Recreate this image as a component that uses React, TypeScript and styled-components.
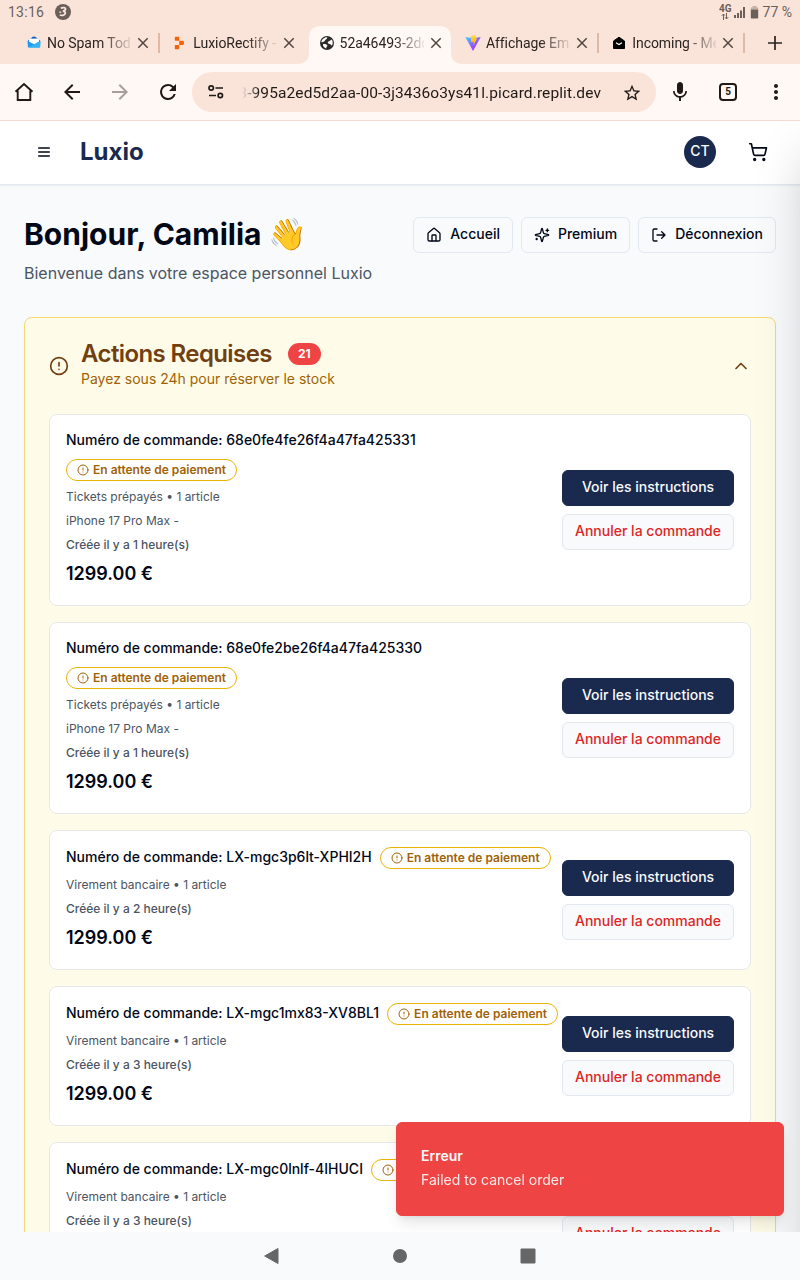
import React from 'react';
import styled, { createGlobalStyle, css } from 'styled-components';

const GlobalStyle = createGlobalStyle`
  *, *::before, *::after { box-sizing: border-box; }
  body { margin: 0; background: #f8fafc; }
  h1, h2, p { margin: 0; }
  button { font: inherit; margin: 0; }
  svg { display: block; flex: none; }
`;

const Screen = styled.div`
  width: 800px;
  height: 1280px;
  display: flex;
  flex-direction: column;
  overflow: hidden;
  font-family: Inter, sans-serif;
  color: #020817;
`;

/* ---------- Browser chrome ---------- */

const StatusBar = styled.div`
  height: 26px;
  flex: none;
  display: flex;
  align-items: center;
  justify-content: space-between;
  padding: 0 8px 2px 8px;
  background: #fae4d9;
  color: #6b5f5a;
  font: 14px/24px Roboto, sans-serif;
`;

const StatusGroup = styled.div<{ $gap: number }>`
  display: flex;
  align-items: center;
  gap: ${(p) => p.$gap}px;
`;

const Clock = styled.span`
  letter-spacing: 0.25px;
`;

const Battery = styled.span`
  letter-spacing: 0;
`;

const TabStrip = styled.div`
  height: 38px;
  flex: none;
  display: flex;
  padding-left: 14px;
  background: #fae4d9;
  font: 14px/34px Roboto, sans-serif;
  color: #2b2320;
`;

const Tab = styled.div<{ $divider?: boolean }>`
  position: relative;
  width: 146.3px;
  height: 38px;
  display: flex;
  align-items: center;
  padding: 0 0 4px 12px;
  ${(p) =>
    p.$divider &&
    css`
      &::after {
        content: '';
        position: absolute;
        right: 0;
        top: 7px;
        width: 2px;
        height: 20px;
        background: #deb9a5;
      }
    `}
`;

const ActiveShape = styled.svg`
  position: absolute;
  left: -9.6px;
  top: 0;
`;

const Favicon = styled.span`
  position: relative;
  width: 16px;
  height: 16px;
  flex: none;
  display: flex;
  align-items: center;
  justify-content: center;
`;

const TabTitle = styled.span`
  position: relative;
  width: 84px;
  margin-left: 5px;
  white-space: nowrap;
  overflow: hidden;
  letter-spacing: -0.05px;
  mask-image: linear-gradient(to right, #000 64%, transparent 104%);
`;

const TabClose = styled.span`
  position: relative;
  margin-left: 6px;
`;

const NewTab = styled.div`
  display: flex;
  padding: 10px 0 0 23px;
`;

const Toolbar = styled.div`
  height: 57px;
  flex: none;
  display: flex;
  align-items: center;
  background: #fff8f5;
  border-bottom: 1px solid #f5dcd0;
  color: #201a17;
`;

const ToolSlot = styled.div<{ $dim?: boolean }>`
  width: 48px;
  display: flex;
  justify-content: center;
  opacity: ${(p) => (p.$dim ? 0.4 : 1)};
`;

const UrlPill = styled.div`
  width: 464px;
  height: 40px;
  flex: none;
  display: flex;
  align-items: center;
  border-radius: 20px;
  background: #fae4d9;
  padding-left: 14px;
`;

const Url = styled.span`
  width: 362px;
  margin-left: 13px;
  padding-top: 2px;
  display: flex;
  justify-content: flex-end;
  overflow: hidden;
  white-space: nowrap;
  font: 15.5px/24px Roboto, sans-serif;
  letter-spacing: 0.1px;
  mask-image: linear-gradient(to right, transparent 3px, #000 20px);
`;

const StarSlot = styled.div`
  margin-left: 21px;
  padding-top: 1px;
`;

const TabCount = styled.div`
  width: 18px;
  height: 18px;
  border: 2px solid #201a17;
  border-radius: 4px;
  font: bold 10px/14px Roboto, sans-serif;
  text-align: center;
`;

const NavBar = styled.div`
  height: 48px;
  flex: none;
  display: flex;
  align-items: center;
  justify-content: center;
  gap: 112px;
  background: #f8fafc;
`;

/* ---------- Site ---------- */

const Site = styled.div`
  position: relative;
  flex: 1;
  min-height: 0;
  overflow: hidden;
  background: #f8fafc;
`;

const SiteHeader = styled.header`
  height: 64px;
  display: flex;
  align-items: center;
  padding: 0 32px 1px 36px;
  background: #fff;
  border-bottom: 1px solid #e2e8f0;
  box-shadow: 0 1px 2px rgba(0, 0, 0, 0.06);
`;

const Brand = styled.span`
  flex: 1;
  margin-left: 28px;
  font-weight: 700;
  font-size: 24px;
  line-height: 32px;
  color: #1a2a4e;
`;

const Avatar = styled.div`
  width: 32px;
  height: 32px;
  margin-right: 32px;
  border-radius: 50%;
  background: #1a2a4e;
  color: #f8fafc;
  font-size: 14px;
  font-weight: 500;
  line-height: 30px;
  text-align: center;
`;

const Main = styled.main`
  padding: 32px 24px 0;
`;

const Intro = styled.div`
  display: flex;
  justify-content: space-between;
  align-items: flex-start;
  margin-bottom: 32px;
`;

const Greeting = styled.h1`
  height: 36px;
  font-size: 30px;
  line-height: 34px;
  font-weight: 700;
  white-space: nowrap;
`;

const Emoji = styled.span`
  font-family: 'Noto Color Emoji', sans-serif;
  font-size: 31px;
  line-height: 30px;
  font-weight: 400;
`;

const Welcome = styled.p`
  margin-top: 8px;
  font-size: 16px;
  line-height: 24px;
  color: #4b5563;
`;

const Actions = styled.div`
  display: flex;
  gap: 8px;
`;

const buttonBase = css`
  height: 36px;
  border-radius: 6px;
  font-size: 14px;
  font-weight: 500;
  line-height: 20px;
  white-space: nowrap;
`;

const LinkButton = styled.button`
  ${buttonBase}
  display: flex;
  align-items: center;
  gap: 8px;
  padding: 0 12px;
  border: 1px solid #e2e8f0;
  background: #f8fafc;
  color: #020817;
`;

const ButtonLabel = styled.span`
  padding-bottom: 2px;
`;

const Panel = styled.section`
  padding: 24px;
  border: 1px solid #f3d877;
  border-radius: 8px;
  background: #fefce8;
  box-shadow: 0 1px 2px rgba(0, 0, 0, 0.05);
`;

const PanelHead = styled.div`
  display: flex;
  align-items: center;
  gap: 12px;
  height: 48px;
  margin-bottom: 24px;
  color: #713f12;
`;

const PanelText = styled.div`
  flex: 1;
  padding-bottom: 2px;
`;

const PanelTitle = styled.h2`
  display: flex;
  align-items: center;
  gap: 16px;
  height: 24px;
  font-size: 24px;
  line-height: 24px;
  font-weight: 600;
  letter-spacing: -0.6px;
`;

const Count = styled.span`
  width: 33px;
  height: 22px;
  border-radius: 11px;
  background: #ef4444;
  color: #f8fafc;
  font-size: 12px;
  font-weight: 700;
  line-height: 22px;
  letter-spacing: 0;
  text-align: center;
`;

const PanelHint = styled.p`
  margin-top: 3px;
  font-size: 14px;
  line-height: 20px;
  color: #a16207;
`;

const OrderList = styled.div`
  display: flex;
  flex-direction: column;
  gap: 16px;
`;

const OrderCard = styled.article`
  display: flex;
  align-items: center;
  padding: 16px;
  border: 1px solid #e5e7eb;
  border-radius: 8px;
  background: #fff;
`;

const OrderInfo = styled.div`
  flex: 1;
  min-width: 0;
  display: flex;
  flex-direction: column;
  gap: 8px;
`;

const OrderTop = styled.div`
  display: flex;
  flex-wrap: wrap;
  align-items: center;
  gap: 8px;
`;

const OrderNumber = styled.span`
  position: relative;
  top: -1px;
  font-size: 14px;
  line-height: 20px;
  font-weight: 500;
  white-space: nowrap;
`;

const StatusBadge = styled.span`
  display: flex;
  align-items: center;
  gap: 4px;
  height: 22px;
  padding: 0 10px;
  border: 1px solid #eab308;
  border-radius: 11px;
  color: #a16207;
  font-size: 12px;
  font-weight: 600;
  line-height: 20px;
  white-space: nowrap;
`;

const Detail = styled.p<{ $strong?: boolean }>`
  font-size: 12px;
  line-height: 16px;
  font-weight: ${(p) => (p.$strong ? 500 : 400)};
  color: #4b5563;
`;

const Price = styled.p`
  height: 28px;
  font-size: 18px;
  line-height: 26px;
  font-weight: 600;
`;

const OrderActions = styled.div`
  width: 172px;
  flex: none;
  display: flex;
  flex-direction: column;
  gap: 8px;
`;

const OrderButton = styled.button<{ $primary?: boolean }>`
  ${buttonBase}
  padding: 0 0 2px;
  border: 1px solid ${(p) => (p.$primary ? '#1a2a4e' : '#e2e8f0')};
  background: ${(p) => (p.$primary ? '#1a2a4e' : '#f8fafc')};
  color: ${(p) => (p.$primary ? '#f8fafc' : '#dc2626')};
`;

const Toast = styled.div`
  position: absolute;
  right: 16px;
  bottom: 16px;
  width: 388px;
  height: 94px;
  padding: 24px;
  border: 1px solid #ef4444;
  border-radius: 6px;
  background: #ef4444;
  color: #f8fafc;
  font-size: 14px;
  line-height: 20px;
  box-shadow: 0 10px 15px -3px rgba(0, 0, 0, 0.1), 0 4px 6px -4px rgba(0, 0, 0, 0.1);
`;

const ToastTitle = styled.p`
  position: relative;
  top: -1px;
  font-weight: 600;
  margin-bottom: 4px;
`;

const ToastText = styled.p`
  position: relative;
  top: -1px;
  opacity: 0.9;
`;

/* Closed drawer parked past the right edge; only its shadow shows. */
const Drawer = styled.aside`
  position: absolute;
  left: 100%;
  top: 0;
  width: 384px;
  height: 1160px;
  box-shadow: 0 25px 50px -12px rgba(0, 0, 0, 0.25);
`;

/* ---------- Icons ---------- */

const Stroke = ({ size, children }: { size: number; children: React.ReactNode }) => (
  <svg width={size} height={size} viewBox="0 0 24 24" fill="none" stroke="currentColor" strokeWidth="2" strokeLinecap="round" strokeLinejoin="round">
    {children}
  </svg>
);

const Alert = ({ size }: { size: number }) => (
  <Stroke size={size}>
    <circle cx="12" cy="12" r="10" />
    <path d="M12 8v4M12 16h.01" />
  </Stroke>
);

const Material = ({ d, size = 24 }: { d: string; size?: number }) => (
  <svg width={size} height={size} viewBox="0 0 24 24" fill="currentColor">
    <path d={d} />
  </svg>
);

const Close = () => (
  <svg width="12" height="12" viewBox="0 0 12 12" stroke="#514640" strokeWidth="1.500">
    <path d="m1.300 1.300 9.400 9.400M10.700 1.300 1.300 10.700" />
  </svg>
);

const MailIcon = () => (
  <svg width="14" height="14" viewBox="0 0 14 14">
    <path d="M4.300 2.500Q4.300.5 7 .5t2.700 2Z" fill="#1565c0" />
    <path d="M.8 4.500 3 2.800h8l2.200 1.700V8H.8Z" fill="#1e88e5" />
    <path d="M2 3h10v5.500H2z" fill="#fff" />
    <path d="M.8 5 7 8.300 13.200 5v5.600q0 1-1 1H1.800q-1 0-1-1Z" fill="#1e9bf0" />
    <path d="m1.300 11.400 11.900-5.800v5q0 1-1 1H1.800Z" fill="#36b4f5" />
  </svg>
);

const ReplitIcon = () => (
  <svg width="14" height="14" viewBox="0 0 14 14" fill="#f26207">
    <path d="M2.600.8h2.800q.8 0 .8.800v3.200H2.600q-.8 0-.8-.8V1.600q0-.8.8-.8ZM6.200 4.800h3.900q.8 0 .8.800v2.500q0 .8-.8.800H6.200ZM2.600 8.900h3.600v3.500q0 .8-.8.800H2.600q-.8 0-.8-.8V9.700q0-.8.8-.8Z" />
  </svg>
);

const GlobeIcon = () => (
  <svg width="14" height="14" viewBox="0 0 14 14">
    <circle cx="7" cy="7" r="7" fill="#2b2b2d" />
    <path d="M7.500 1.300c-1 1.300-.3 1.800-1.600 2.200-1.200.3-.6 1.600-1.800 1.900C3 5.700 2.500 6.500 1.400 6.300 1.500 3.500 4.300 1 7.500 1.300ZM8 6c1.300-1.200 1.600-.7 2.500-1.700.5-.6 1.300-.6 1.700 0 .8 1.700.7 3.600-.2 5.200-1.200-.2-1.200-1.500-2.300-1.600C8.500 7.800 7 7 8 6ZM3 8c1.500-.3 3.500 0 4.300 1.200.4 1-1 1.300-1.200 3.300C4.300 12 2.500 10 3 8Z" fill="#fff8f5" />
  </svg>
);

const ViteIcon = () => (
  <svg width="16" height="16" viewBox="0 0 16 16">
    <defs>
      <linearGradient id="vite" x1="0" y1="0" x2="1" y2="1">
        <stop offset="0" stopColor="#41d1ff" />
        <stop offset=".7" stopColor="#a23bfd" />
      </linearGradient>
      <linearGradient id="bolt" x1="0" y1="0" x2="0" y2="1">
        <stop offset="0" stopColor="#ffdd35" />
        <stop offset="1" stopColor="#ffa800" />
      </linearGradient>
    </defs>
    <path d="M.3 2 8 3.300 15.700 2 8 16Z" fill="url(#vite)" />
    <path d="m6 1 5-1-.8 3.500 1.800-.3L8.300 11l.5-4H6Z" fill="url(#bolt)" />
  </svg>
);

const InboxIcon = () => (
  <svg width="14" height="14" viewBox="0 0 14 14">
    <path d="M1.500 5 7 1.200 12.500 5v7.500h-11Z" fill="#000" stroke="#000" strokeLinejoin="round" />
    <path d="m4 6.800 3 1.700 3-1.700" fill="none" stroke="#fff" strokeWidth="1.100" />
  </svg>
);

const StatusBadgeIcon = () => (
  <svg width="16" height="16" viewBox="0 0 16 16">
    <circle cx="8" cy="8" r="8" fill="#6b5f5a" />
    <path d="M5.800 4.300c1.700-1 5-.9 4.700.9-.2 1.300-1.500 1.800-2.700 1.900 1.500.1 2.900.8 2.400 2.500-.6 1.900-3.500 2.100-5.400 1.400" fill="none" stroke="#fae4d9" strokeWidth="1.800" />
    <path d="M4.300 8.200h2" stroke="#fae4d9" strokeWidth="1.300" />
  </svg>
);

const NetworkType = styled.span`
  display: flex;
  flex-direction: column;
  align-items: center;
  font: 700 10px/8px Roboto, sans-serif;
`;

const SparklesIcon = () => (
  <Stroke size={16}>
    <path d="M9.937 15.500A2 2 0 0 0 8.500 14.063l-6.135-1.582a.5.5 0 0 1 0-.962L8.500 9.936A2 2 0 0 0 9.937 8.500l1.582-6.135a.5.5 0 0 1 .963 0L14.063 8.500A2 2 0 0 0 15.500 9.937l6.135 1.581a.5.5 0 0 1 0 .964L15.500 14.063a2 2 0 0 0-1.437 1.437l-1.582 6.135a.5.5 0 0 1-.963 0z" />
    <path d="M20 3v4M22 5h-4M4 17v2M5 18H3" />
  </Stroke>
);

/* ---------- Data ---------- */

const tabs = [
  { title: 'No Spam Today', icon: <MailIcon />, divider: true },
  { title: 'LuxioRectify - R', icon: <ReplitIcon /> },
  { title: '52a46493-2dd', icon: <GlobeIcon />, active: true },
  { title: 'Affichage Email', icon: <ViteIcon />, divider: true },
  { title: 'Incoming - Mes', icon: <InboxIcon />, divider: true },
];

const orders = [
  { id: '68e0fe4fe26f4a47fa425331', method: 'Tickets prépayés', product: 'iPhone 17 Pro Max -', hours: 1 },
  { id: '68e0fe2be26f4a47fa425330', method: 'Tickets prépayés', product: 'iPhone 17 Pro Max -', hours: 1 },
  { id: 'LX-mgc3p6lt-XPHI2H', method: 'Virement bancaire', hours: 2 },
  { id: 'LX-mgc1mx83-XV8BL1', method: 'Virement bancaire', hours: 3 },
  { id: 'LX-mgc0lnlf-4IHUCI', method: 'Virement bancaire', hours: 3 },
];

export default function App() {
  return (
    <Screen>
      <GlobalStyle />
      <StatusBar>
        <StatusGroup $gap={11}>
          <Clock>13:16</Clock>
          <StatusBadgeIcon />
        </StatusGroup>
        <StatusGroup $gap={2}>
          <NetworkType>
            4G
            <svg width="8" height="7" viewBox="0 0 8 7" fill="none" stroke="currentColor">
              <path d="M2.500 7V1M.8 2.800 2.500 1l1.300 1.500M5.500 0v6M4.200 4.300 5.500 6l1.700-1.800" />
            </svg>
          </NetworkType>
          <svg width="11" height="11" viewBox="0 0 11 11" fill="currentColor">
            <path d="M0 8h2v3H0zM3 6h2v5H3zM6 3.500h2V11H6zM9 0h2v11H9z" />
          </svg>
          <svg width="14" height="13" viewBox="0 0 14 13" fill="currentColor">
            <path d="M5.500 0h4v1.500h-4z" opacity=".4" />
            <path d="M3.800 1.500h7.400v2H3.800z" opacity=".4" />
            <path d="M3.800 3.500h7.400v8.300q0 .7-.7.7h-6q-.7 0-.7-.7z" />
          </svg>
          <Battery>77 %</Battery>
        </StatusGroup>
      </StatusBar>
      <TabStrip>
        {tabs.map((t) => (
          <Tab key={t.title} $divider={t.divider}>
            {t.active && (
              <ActiveShape width="166" height="38" viewBox="0 0 166 38">
                <path d="M0 38c8 0 12-4 12-12V12C12 4 16 0 24 0h118c8 0 12 4 12 12v14c0 8 4 12 12 12Z" fill="#fff8f5" />
              </ActiveShape>
            )}
            <Favicon>{t.icon}</Favicon>
            <TabTitle>{t.title}</TabTitle>
            <TabClose>
              <Close />
            </TabClose>
          </Tab>
        ))}
        <NewTab>
          <svg width="14" height="14" viewBox="0 0 14 14" stroke="#2b2320" strokeWidth="1.700">
            <path d="M7 0v14M0 7h14" />
          </svg>
        </NewTab>
      </TabStrip>
      <Toolbar>
        <ToolSlot>
          <svg width="20" height="20" viewBox="0 0 20 20" fill="none" stroke="currentColor" strokeWidth="1.900">
            <path d="M1.500 9.800 10 2l8.500 7.800M3.700 8.500V18h12.600V8.500" />
          </svg>
        </ToolSlot>
        <ToolSlot>
          <Material d="M20 11H7.830l5.590-5.590L12 4l-8 8 8 8 1.410-1.410L7.830 13H20z" />
        </ToolSlot>
        <ToolSlot $dim>
          <Material d="m12 4-1.410 1.410L16.170 11H4v2h12.170l-5.580 5.590L12 20l8-8z" />
        </ToolSlot>
        <ToolSlot>
          <Material d="M17.650 6.350A7.960 7.960 0 0 0 12 4a8 8 0 1 0 7.730 10h-2.080A6 6 0 1 1 12 6c1.660 0 3.140.69 4.220 1.780L13 11h7V4z" />
        </ToolSlot>
        <UrlPill>
          <svg width="20" height="20" viewBox="0 0 20 20" fill="none" stroke="currentColor" strokeWidth="1.700">
            <circle cx="5.200" cy="6" r="2.200" />
            <circle cx="14.300" cy="13.500" r="2.200" />
            <path d="M9.500 6h7.500M3 13.500h7" />
          </svg>
          <Url>3-995a2ed5d2aa-00-3j3436o3ys41l.picard.replit.dev</Url>
          <StarSlot>
            <Material size={20} d="m22 9.240-7.190-.62L12 2 9.190 8.630 2 9.240l5.460 4.730L5.820 21 12 17.270 18.180 21l-1.630-7.030zM12 15.400l-3.760 2.270 1-4.280-3.320-2.880 4.380-.38L12 6.100l1.710 4.040 4.380.38-3.320 2.880 1 4.280z" />
          </StarSlot>
        </UrlPill>
        <ToolSlot>
          <Material d="M12 14c1.660 0 2.990-1.340 2.990-3L15 5c0-1.660-1.340-3-3-3S9 3.340 9 5v6c0 1.660 1.340 3 3 3zm5.300-3c0 3-2.540 5.100-5.300 5.100S6.700 14 6.700 11H5c0 3.410 2.720 6.230 6 6.720V21h2v-3.280c3.280-.48 6-3.300 6-6.720z" />
        </ToolSlot>
        <ToolSlot>
          <TabCount>5</TabCount>
        </ToolSlot>
        <ToolSlot>
          <Material d="M12 8c1.100 0 2-.9 2-2s-.9-2-2-2-2 .9-2 2 .9 2 2 2zm0 2c-1.100 0-2 .9-2 2s.9 2 2 2 2-.9 2-2-.9-2-2-2zm0 6c-1.100 0-2 .9-2 2s.9 2 2 2 2-.9 2-2-.9-2-2-2z" />
        </ToolSlot>
      </Toolbar>

      <Site>
        <SiteHeader>
          <Stroke size={16}>
            <path d="M4 6h16M4 12h16M4 18h16" />
          </Stroke>
          <Brand>Luxio</Brand>
          <Avatar>CT</Avatar>
          <Stroke size={20}>
            <circle cx="8" cy="21" r="1" />
            <circle cx="19" cy="21" r="1" />
            <path d="M2.050 2.050h2l2.660 12.420a2 2 0 0 0 2 1.580h9.780a2 2 0 0 0 1.950-1.570l1.650-7.430H5.120" />
          </Stroke>
        </SiteHeader>
        <Main>
          <Intro>
            <div>
              <Greeting>
                Bonjour, Camilia <Emoji>👋</Emoji>
              </Greeting>
              <Welcome>Bienvenue dans votre espace personnel Luxio</Welcome>
            </div>
            <Actions>
              <LinkButton>
                <Stroke size={16}>
                  <path d="M15 21v-8a1 1 0 0 0-1-1h-4a1 1 0 0 0-1 1v8" />
                  <path d="M3 10a2 2 0 0 1 .709-1.528l7-5.999a2 2 0 0 1 2.582 0l7 5.999A2 2 0 0 1 21 10v9a2 2 0 0 1-2 2H5a2 2 0 0 1-2-2z" />
                </Stroke>
                <ButtonLabel>Accueil</ButtonLabel>
              </LinkButton>
              <LinkButton>
                <SparklesIcon />
                <ButtonLabel>Premium</ButtonLabel>
              </LinkButton>
              <LinkButton>
                <Stroke size={16}>
                  <path d="M9 21H5a2 2 0 0 1-2-2V5a2 2 0 0 1 2-2h4M16 17l5-5-5-5M21 12H9" />
                </Stroke>
                <ButtonLabel>Déconnexion</ButtonLabel>
              </LinkButton>
            </Actions>
          </Intro>
          <Panel>
            <PanelHead>
              <Alert size={20} />
              <PanelText>
                <PanelTitle>
                  Actions Requises <Count>21</Count>
                </PanelTitle>
                <PanelHint>Payez sous 24h pour réserver le stock</PanelHint>
              </PanelText>
              <Stroke size={20}>
                <path d="m18 15-6-6-6 6" />
              </Stroke>
            </PanelHead>
            <OrderList>
              {orders.map((o) => (
                <OrderCard key={o.id}>
                  <OrderInfo>
                    <OrderTop>
                      <OrderNumber>Numéro de commande: {o.id}</OrderNumber>
                      <StatusBadge>
                        <Alert size={12} />
                        En attente de paiement
                      </StatusBadge>
                    </OrderTop>
                    <Detail>{o.method} • 1 article</Detail>
                    {o.product && <Detail>{o.product}</Detail>}
                    <Detail $strong>Créée il y a {o.hours} heure(s)</Detail>
                    <Price>1299.00 €</Price>
                  </OrderInfo>
                  <OrderActions>
                    <OrderButton $primary>Voir les instructions</OrderButton>
                    <OrderButton>Annuler la commande</OrderButton>
                  </OrderActions>
                </OrderCard>
              ))}
            </OrderList>
          </Panel>
        </Main>
        <Drawer />
        <Toast>
          <ToastTitle>Erreur</ToastTitle>
          <ToastText>Failed to cancel order</ToastText>
        </Toast>
      </Site>

      <NavBar>
        <svg width="16" height="18" viewBox="0 0 16 18" fill="#666">
          <path d="M14 1.500v15L.7 9Z" stroke="#666" strokeLinejoin="round" />
        </svg>
        <svg width="16" height="16" viewBox="0 0 16 16" fill="#666">
          <circle cx="8" cy="8" r="7" />
        </svg>
        <svg width="16" height="16" viewBox="0 0 16 16" fill="#666">
          <rect x=".5" y=".5" width="15" height="15" rx="1" />
        </svg>
      </NavBar>
    </Screen>
  );
}
